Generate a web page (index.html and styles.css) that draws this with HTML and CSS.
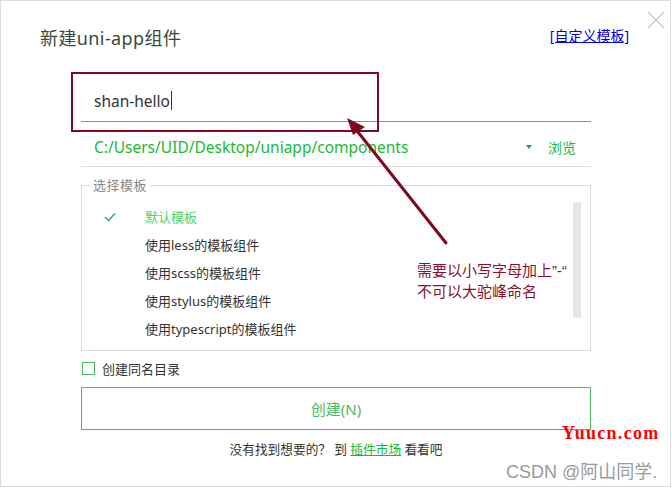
FILE: index.html
```html
<!DOCTYPE html>
<html lang="zh">
<head>
<meta charset="utf-8">
<link rel="stylesheet" href="styles.css">
</head>
<body>
<div class="dialog">
  <div class="close" aria-label="close">
    <svg width="18" height="18" viewBox="0 0 18 18"><path d="M1 1 L17 17 M17 1 L1 17" stroke="#c8c8c8" stroke-width="1.2" fill="none"/></svg>
  </div>
  <div class="header">
    <div class="title">新建uni-app组件</div>
    <a class="custom" href="#">[自定义模板]</a>
  </div>
  <div class="body">
    <div class="name-row">shan-hello<span class="caret"></span></div>
    <div class="path-row">
      <span class="path">C:/Users/UID/Desktop/uniapp/components</span>
      <span class="tri"></span>
      <span class="browse">浏览</span>
    </div>
    <fieldset class="tpl">
      <legend>选择模板</legend>
      <div class="tpl-inner">
        <ul class="list">
          <li class="item active"><span class="check"><svg width="12" height="10" viewBox="0 0 12 10"><path d="M1 5 L4.5 8.5 L11 1.5" stroke="#3cb35a" stroke-width="1.6" fill="none"/></svg></span>默认模板</li>
          <li class="item"><span class="check"></span>使用less的模板组件</li>
          <li class="item"><span class="check"></span>使用scss的模板组件</li>
          <li class="item"><span class="check"></span>使用stylus的模板组件</li>
          <li class="item"><span class="check"></span>使用typescript的模板组件</li>
        </ul>
        <div class="scrollbar"></div>
      </div>
    </fieldset>
    <label class="same-dir"><span class="box"></span>创建同名目录</label>
    <div class="create">创建(N)</div>
    <div class="footer">没有找到想要的？ 到 <a href="#">插件市场</a> 看看吧</div>
  </div>

  <div class="mark-box"></div>
  <svg class="arrow" width="120" height="140" viewBox="0 0 120 140">
    <line x1="115" y1="132" x2="23" y2="16" stroke="#7d0a1f" stroke-width="3" stroke-linecap="round"/>
    <polygon points="16,7 34,16 22,24" fill="#7d0a1f"/>
  </svg>
  <div class="note">需要以小写字母加上<span class="q">”-“</span><br>不可以大驼峰命名</div>
  <div class="wm-yuucn">Yuucn.com</div>
  <div class="wm-csdn">CSDN @阿山同学.</div>
</div>
</body>
</html>
```
FILE: styles.css
```css
* { box-sizing: border-box; }
html, body { margin: 0; padding: 0; background: #fff; }
body { font-family: "Noto Sans", "Noto Sans CJK SC", sans-serif; color: #333; }

.dialog {
  position: relative;
  width: 671px;
  height: 487px;
  border: 1px solid #dcdcdc;
  background: #fff;
}
.close { position: absolute; left: 646px; top: 10px; width: 18px; height: 18px; }
.close svg { display: block; }

.header {
  display: flex;
  justify-content: space-between;
  align-items: center;
  padding: 24px 41px 0 39px;
  height: 50px;
}
.title { font-size: 18px; color: #3a4a3a; line-height: 24px; letter-spacing: 0.4px; }
.custom { font-size: 14px; color: #0000ee; line-height: 20px; margin-top: -4px; }

.body { padding: 30px 79px 0 80px; }

.name-row {
  height: 41px;
  border-bottom: 1px solid #4cbb5a;
  padding: 10px 0 0 13px;
  font-size: 15.5px;
  line-height: 20px;
  color: #333;
  display: flex;
  align-items: flex-start;
}
.caret { display: inline-block; width: 1px; height: 19px; background: #333; margin-left: 1px; }

.path-row {
  height: 45px;
  border-bottom: 1px solid #dedede;
  display: flex;
  align-items: center;
  padding: 5px 15px 0 13px;
}
.path { font-size: 15.5px; color: #19b935; flex: 1; }
.tri {
  width: 0; height: 0;
  border-left: 3px solid transparent;
  border-right: 3px solid transparent;
  border-top: 4px solid #2d9c49;
  margin-right: 16px;
}
.browse { font-size: 14px; color: #19b935; }

.tpl {
  margin: 10px 0 0 0;
  padding: 0;
  border: 1px solid #dcdcdc;
  height: 174px;
  min-width: 0;
}
.tpl legend {
  font-size: 13px;
  color: #888;
  padding: 0 3px;
  margin-left: 8px;
  letter-spacing: 0.5px;
  line-height: 16px;
}
.tpl-inner { display: flex; justify-content: space-between; padding: 9px 9px 0 0; }
.list { list-style: none; margin: 1px 0 0 0; padding: 0; }
.item {
  font-size: 13px;
  line-height: 28px;
  height: 28px;
  display: flex;
  align-items: center;
  color: #333;
}
.item.active { color: #4cd46a; }
.check { width: 63px; padding-left: 22px; display: flex; align-items: center; }
.check svg { display: block; }
.scrollbar { width: 8px; height: 116px; background: #e6e6e6; }

.same-dir {
  display: flex;
  align-items: center;
  margin-top: 10px;
  font-size: 13px;
  height: 14px;
  color: #333;
}
.box { width: 13px; height: 13px; border: 1px solid #4cbb5a; margin: 0 7px 0 1px; }

.create {
  margin-top: 12px;
  height: 43px;
  border: 1px solid #4cbb5a;
  display: flex;
  align-items: center;
  justify-content: center;
  font-size: 15px;
  color: #4cbb5a;
}
.footer {
  margin-top: 10px;
  text-align: center;
  font-size: 12.7px;
  color: #333;
  line-height: 18px;
}
.footer a { color: #19b935; }

.mark-box {
  position: absolute;
  left: 70px;
  top: 71px;
  width: 308px;
  height: 60px;
  border: 2px solid #7d0a1f;
}
.arrow { position: absolute; left: 330px; top: 110px; }
.note {
  position: absolute;
  left: 416px;
  top: 259px;
  font-size: 15px;
  line-height: 21px;
  color: #8a1030;
}
.note .q { font-family: "Liberation Sans", sans-serif; }
.wm-yuucn {
  position: absolute;
  left: 561px;
  top: 422px;
  font-family: "Liberation Serif", serif;
  font-weight: bold;
  font-size: 18px;
  letter-spacing: 1.3px;
  color: #ff0000;
}
.wm-csdn {
  position: absolute;
  left: 505px;
  top: 456px;
  font-family: "Liberation Sans", "Noto Sans CJK SC", sans-serif;
  font-size: 18px;
  color: #9a9a9a;
}
```
